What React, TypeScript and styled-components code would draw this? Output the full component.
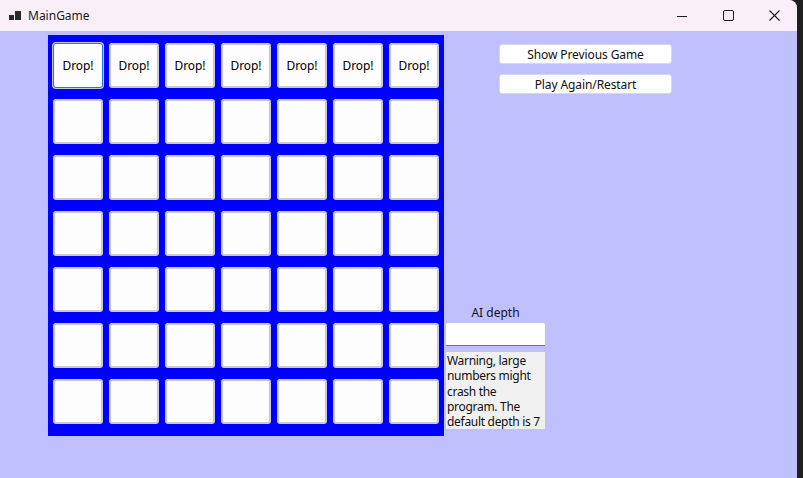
import React from "react";
import styled, { createGlobalStyle } from "styled-components";

const Global = createGlobalStyle`
  html, body { margin: 0; padding: 0; background: #1e1e1e; }
  body { width: 803px; height: 478px; overflow: hidden; font-family: "Noto Sans", "Open Sans", sans-serif; }
  * { box-sizing: border-box; }
`;

const Window = styled.div`
  width: 797px;
  height: 478px;
  display: flex;
  flex-direction: column;
  background: #c0c0ff;
  border-top-right-radius: 8px;
  overflow: hidden;
`;

const TitleBar = styled.div`
  height: 31px;
  flex: none;
  display: flex;
  align-items: center;
  background: #f8eff8;
  padding-left: 9px;
`;

const Title = styled.span`
  font-size: 12px;
  color: #1a1a1a;
  margin-left: 6px;
`;

const Controls = styled.div`
  margin-left: auto;
  display: flex;
  height: 100%;
`;

const CtrlBtn = styled.div`
  width: 46px;
  height: 100%;
  display: flex;
  align-items: center;
  justify-content: center;
`;

const Content = styled.div`
  flex: 1;
  display: flex;
  padding: 4px 0 0 48px;
`;

const Board = styled.div`
  width: 396px;
  height: 401px;
  background: #0000ff;
  display: grid;
  grid-template-columns: repeat(7, 56px);
  grid-template-rows: repeat(7, 56px);
  padding: 2px 2px 7px 2px;
`;

const Cell = styled.button<{ $focus?: boolean }>`
  margin: 6px 3px 5px 3px;
  width: 50px;
  height: 45px;
  padding: 0;
  background: #fdfdfd;
  border: ${(p) => (p.$focus ? "1px solid #1b7ad6" : "2px solid #c9c9d3")};
  box-shadow: ${(p) => (p.$focus ? "0 0 0 1px #c9c9d3" : "none")};
  border-radius: 3px;
  font-family: "Noto Sans", "Open Sans", sans-serif;
  font-size: 12px;
  letter-spacing: -0.1px;
  color: #000;
  display: flex;
  align-items: center;
  justify-content: center;
`;

const Side = styled.div`
  display: flex;
  flex-direction: column;
  justify-content: space-between;
  padding: 9px 0 7px 2px;
  height: 401px;
`;

const ButtonStack = styled.div`
  display: flex;
  flex-direction: column;
  gap: 10px;
  margin-left: 53px;
`;

const SideButton = styled.button`
  width: 173px;
  height: 20px;
  padding: 0;
  background: #fefefe;
  border: 1px solid #d8d8e4;
  border-radius: 3px;
  font-family: "Noto Sans", "Open Sans", sans-serif;
  font-size: 12px;
  letter-spacing: -0.1px;
  color: #111;
  display: flex;
  align-items: center;
  justify-content: center;
`;

const DepthPanel = styled.div`
  width: 99px;
  display: flex;
  flex-direction: column;
`;

const DepthLabel = styled.div`
  font-size: 12px;
  color: #111;
  text-align: center;
  height: 18px;
  line-height: 16px;
`;

const DepthInput = styled.input`
  width: 99px;
  height: 23px;
  border: none;
  border-bottom: 1px solid #7a7a7a;
  background: #fff;
  border-radius: 2px 2px 0 0;
  outline: none;
`;

const Warning = styled.div`
  margin-top: 6px;
  width: 99px;
  height: 77px;
  background: #f0f0f0;
  font-size: 12px;
  letter-spacing: -0.3px;
  line-height: 15.3px;
  color: #101010;
  padding: 1px 0 0 1px;
`;

const AppIcon = () => (
  <svg width="13" height="12" viewBox="0 0 13 12">
    <rect x="0" y="5" width="5" height="5" fill="#2b2b2b" />
    <rect x="6" y="1" width="6" height="9" fill="#2b2b2b" />
  </svg>
);

export default function App() {
  const rows = Array.from({ length: 7 });
  const cols = Array.from({ length: 7 });
  return (
    <>
      <Global />
      <Window>
        <TitleBar>
          <AppIcon />
          <Title>MainGame</Title>
          <Controls>
            <CtrlBtn>
              <svg width="10" height="10" viewBox="0 0 10 10">
                <line x1="0" y1="5.5" x2="10" y2="5.5" stroke="#1a1a1a" strokeWidth="1" />
              </svg>
            </CtrlBtn>
            <CtrlBtn>
              <svg width="11" height="11" viewBox="0 0 11 11">
                <rect x="0.5" y="0.5" width="10" height="10" rx="1.5" fill="none" stroke="#1a1a1a" strokeWidth="1" />
              </svg>
            </CtrlBtn>
            <CtrlBtn>
              <svg width="11" height="11" viewBox="0 0 11 11">
                <path d="M0.5 0.5 L10.5 10.5 M10.5 0.5 L0.5 10.5" stroke="#1a1a1a" strokeWidth="1.1" />
              </svg>
            </CtrlBtn>
          </Controls>
        </TitleBar>
        <Content>
          <Board>
            {rows.map((_, r) =>
              cols.map((_, c) => (
                <Cell key={`${r}-${c}`} $focus={r === 0 && c === 0}>
                  {r === 0 ? "Drop!" : ""}
                </Cell>
              ))
            )}
          </Board>
          <Side>
            <ButtonStack>
              <SideButton>Show Previous Game</SideButton>
              <SideButton>Play Again/Restart</SideButton>
            </ButtonStack>
            <DepthPanel>
              <DepthLabel>AI depth</DepthLabel>
              <DepthInput />
              <Warning>
                Warning, large numbers might crash the program. The default depth is 7
              </Warning>
            </DepthPanel>
          </Side>
        </Content>
      </Window>
    </>
  );
}
